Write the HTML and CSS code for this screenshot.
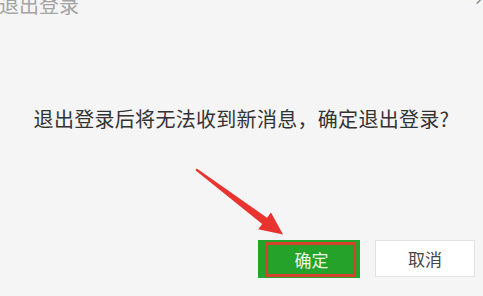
FILE: index.html
```html
<!DOCTYPE html>
<html lang="zh-CN">
<head>
<meta charset="utf-8">
<link rel="stylesheet" href="styles.css">
</head>
<body>
<div class="dialog">
  <div class="title">退出登录</div>
  <div class="close">×</div>
  <div class="message">退出登录后将无法收到新消息，确定退出登录?</div>
  <div class="actions">
    <div class="btn btn-ok"><div class="mark">确定</div></div>
    <div class="btn btn-cancel">取消</div>
  </div>
  <svg class="arrow" width="483" height="296" viewBox="0 0 483 296">
    <polygon points="196.8,168.4 267,217.7 271,212.6 283,234.5 258.2,229.2 262.2,224.1 195.4,170.2" fill="#e8332e"/>
  </svg>
</div>
</body>
</html>
```
FILE: styles.css
```css
html, body {
  margin: 0;
  padding: 0;
  background: #f5f5f5;
}
.dialog {
  position: relative;
  width: 483px;
  height: 296px;
  overflow: hidden;
  display: flex;
  flex-direction: column;
  font-family: "Noto Sans CJK SC", "Microsoft YaHei", sans-serif;
}
.title {
  margin-top: -7px;
  margin-left: -1px;
  font-size: 20px;
  line-height: 24px;
  color: #a3a3a3;
  height: 24px;
}
.close {
  position: absolute;
  right: -8px;
  top: -13px;
  font-size: 18px;
  color: #777;
  line-height: 20px;
}
.message {
  margin-top: 87px;
  text-align: center;
  font-size: 20px;
  line-height: 30px;
  color: #333;
  letter-spacing: 0.3px;
}
.actions {
  margin-top: 106px;
  display: flex;
  justify-content: flex-end;
  gap: 15px;
  padding-right: 8px;
}
.btn {
  box-sizing: border-box;
  height: 38px;
  font-size: 17px;
  display: flex;
  align-items: center;
  justify-content: center;
}
.btn-ok {
  width: 102px;
  background: #25a229;
  padding: 2px 4px 1px 7px;
  align-items: stretch;
}
.mark {
  flex: 1;
  border: 3px solid #d3432d;
  display: flex;
  align-items: center;
  justify-content: center;
  color: #eef6e8;
  padding-left: 2px;
}
.btn-cancel {
  width: 100px;
  height: 37px;
  background: #fff;
  border: 1px solid #e2e2e2;
  color: #444;
}
.arrow {
  position: absolute;
  left: 0;
  top: 0;
  pointer-events: none;
}
```
